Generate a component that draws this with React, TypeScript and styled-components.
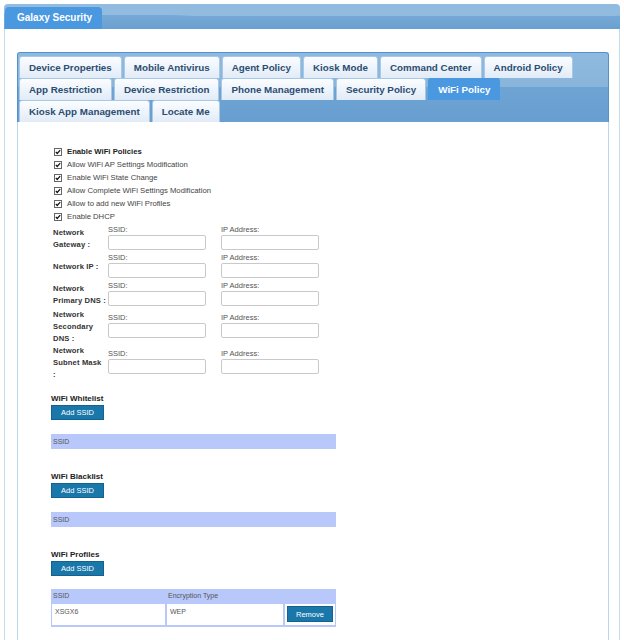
import React from "react";
import styled, { createGlobalStyle } from "styled-components";

const GlobalStyle = createGlobalStyle`
  html, body {
    margin: 0;
    padding: 0;
    background: #fff;
    overflow: hidden;
  }
  body {
    font-family: "Liberation Sans", Arial, sans-serif;
    color: #333;
  }
`;

const Page = styled.div`
  padding: 4px 4px 0 4px;
`;

const Frame = styled.section`
  width: 616px;
`;

const FrameHeader = styled.div`
  height: 25px;
  box-sizing: border-box;
  padding: 3px 0 0 1px;
  border-radius: 4px 4px 0 0;
  display: flex;
  align-items: flex-end;
  background:
    radial-gradient(ellipse 140% 70% at 65% 0%, #92bcdf 0 70%, transparent 71%),
    linear-gradient(#7fb0da, #6aa0d1);
`;

const HeaderTab = styled.div`
  height: 22px;
  line-height: 22px;
  padding: 0 10px 0 12px;
  border-radius: 4px 4px 0 0;
  background: #4a98e0;
  color: #fff;
  font-weight: bold;
  font-size: 10px;
`;

const FrameBody = styled.div`
  border: 1px solid #c2dbef;
  border-top: 0;
  padding: 23px 10px 0 12px;
`;

const TabStrip = styled.div`
  display: flex;
  flex-wrap: wrap;
  column-gap: 2px;
  padding: 3px 1px 0 1px;
  border: 1px solid #5391cd;
  border-bottom: 0;
  border-radius: 3px 3px 0 0;
  background: linear-gradient(#8dbade 0%, #89b5db 49%, #6ea4d4 50%, #699fd0 100%);
`;

const Tab = styled.div<{ $active?: boolean }>`
  height: 22px;
  box-sizing: border-box;
  padding: 0 9px;
  line-height: 21px;
  border: 1px solid ${(p) => (p.$active ? "#4a98e0" : "#a8c8e6")};
  border-bottom: 0;
  border-radius: 3px 3px 0 0;
  font-size: 9.8px;
  font-weight: bold;
  white-space: nowrap;
  color: ${(p) => (p.$active ? "#fff" : "#2b4d72")};
  background: ${(p) =>
    p.$active ? "#4a98e0" : "linear-gradient(#fbfdff, #e1ebf7)"};
`;

const Content = styled.div`
  border-left: 1px solid #bcd6ec;
  border-right: 1px solid #bcd6ec;
  padding: 23px 0 14px 33px;
  background: #fff;
`;

const CheckList = styled.div`
  margin-left: 3px;
`;

const CheckRow = styled.label<{ $strong?: boolean }>`
  display: flex;
  align-items: center;
  gap: 5px;
  height: 13px;
  font-size: 7.7px;
  font-weight: ${(p) => (p.$strong ? "bold" : "normal")};
  color: ${(p) => (p.$strong ? "#222" : "#444")};
`;

const NetworkGrid = styled.div`
  display: grid;
  grid-template-columns: 57px 113px 100px;
  align-items: center;
  margin-top: 2px;
`;

const NetLabel = styled.div`
  padding-left: 2px;
  font-size: 7.6px;
  font-weight: bold;
  line-height: 12px;
  letter-spacing: 0.15px;
  white-space: nowrap;
  color: #333;
`;

const Field = styled.div`
  height: 28px;
  box-sizing: border-box;
  padding-bottom: 3px;
`;

const FieldCaption = styled.div`
  height: 10px;
  line-height: 9px;
  font-size: 7.5px;
  color: #555;
`;

const TextInput = styled.input`
  display: block;
  width: 98px;
  height: 15px;
  box-sizing: border-box;
  margin: 0;
  border: 1px solid #c9c9c9;
  border-radius: 2px;
  background: #fff;
`;

const Sections = styled.div`
  margin-top: 13px;
`;

const Section = styled.div`
  & + & {
    margin-top: 23px;
  }
`;

const SectionTitle = styled.div`
  font-size: 8px;
  font-weight: bold;
  line-height: 10px;
  margin-bottom: 1px;
  color: #222;
`;

const Button = styled.button<{ $w: number; $h: number }>`
  display: block;
  width: ${(p) => p.$w}px;
  height: ${(p) => p.$h}px;
  padding: 0;
  margin: 0;
  border: 1px solid #14628f;
  background: #1a77aa;
  color: #fff;
  font-family: "Liberation Sans", Arial, sans-serif;
  font-size: 7.5px;
`;

const SsidBar = styled.div`
  width: 285px;
  height: 15px;
  margin-top: 14px;
  padding-left: 2px;
  box-sizing: border-box;
  line-height: 15px;
  background: #b9c8fb;
  font-size: 7px;
  color: #555;
`;

const ProfileTable = styled.div`
  width: 285px;
  box-sizing: border-box;
  margin-top: 13px;
  padding: 0 1px 2px 1px;
  display: grid;
  grid-template-columns: 113px 116px 50px;
  column-gap: 2px;
  background: #b9c8fb;
  font-size: 7px;
  color: #555;
`;

const HeadCell = styled.div`
  height: 15px;
  line-height: 14px;
  padding-left: 1px;
`;

const BodyCell = styled.div`
  height: 21px;
  background: #fff;
  padding: 4px 0 0 3px;
  box-sizing: border-box;
`;

const ActionCell = styled(BodyCell)`
  padding: 2px 0 0 2px;
`;

function Check() {
  return (
    <svg width="8" height="8" viewBox="0 0 8 8">
      <rect x="0.5" y="0.5" width="7" height="7" fill="#fff" stroke="#666" />
      <path d="M1.8 3.9 L3.2 5.5 L6.2 2.1" fill="none" stroke="#111" strokeWidth="1.2" />
    </svg>
  );
}

const tabs = [
  "Device Properties",
  "Mobile Antivirus",
  "Agent Policy",
  "Kiosk Mode",
  "Command Center",
  "Android Policy",
  "App Restriction",
  "Device Restriction",
  "Phone Management",
  "Security Policy",
  "WiFi Policy",
  "Kiosk App Management",
  "Locate Me",
];

const checks = [
  "Allow WiFi AP Settings Modification",
  "Enable WiFi State Change",
  "Allow Complete WiFi Settings Modification",
  "Allow to add new WiFi Profiles",
  "Enable DHCP",
];

const networks = [
  ["Network", "Gateway :"],
  ["Network IP :"],
  ["Network", "Primary DNS :"],
  ["Network", "Secondary", "DNS :"],
  ["Network", "Subnet Mask", ":"],
];

const ssidLists = ["WiFi Whitelist", "WiFi Blacklist"];

export default function App() {
  return (
    <>
      <GlobalStyle />
      <Page>
        <Frame>
          <FrameHeader>
            <HeaderTab>Galaxy Security</HeaderTab>
          </FrameHeader>
          <FrameBody>
            <TabStrip>
              {tabs.map((t) => (
                <Tab key={t} $active={t === "WiFi Policy"}>
                  {t}
                </Tab>
              ))}
            </TabStrip>
            <Content>
              <CheckList>
                <CheckRow $strong>
                  <Check />
                  Enable WiFi Policies
                </CheckRow>
                {checks.map((c) => (
                  <CheckRow key={c}>
                    <Check />
                    {c}
                  </CheckRow>
                ))}
              </CheckList>

              <NetworkGrid>
                {networks.map((lines, i) => (
                  <React.Fragment key={i}>
                    <NetLabel>
                      {lines.map((l, j) => (
                        <div key={j}>{l}</div>
                      ))}
                    </NetLabel>
                    <Field>
                      <FieldCaption>SSID:</FieldCaption>
                      <TextInput />
                    </Field>
                    <Field>
                      <FieldCaption>IP Address:</FieldCaption>
                      <TextInput />
                    </Field>
                  </React.Fragment>
                ))}
              </NetworkGrid>

              <Sections>
                {ssidLists.map((title) => (
                  <Section key={title}>
                    <SectionTitle>{title}</SectionTitle>
                    <Button $w={53} $h={15}>Add SSID</Button>
                    <SsidBar>SSID</SsidBar>
                  </Section>
                ))}

                <Section>
                  <SectionTitle>WiFi Profiles</SectionTitle>
                  <Button $w={53} $h={15}>Add SSID</Button>
                  <ProfileTable>
                    <HeadCell>SSID</HeadCell>
                    <HeadCell>Encryption Type</HeadCell>
                    <HeadCell />
                    <BodyCell>XSGX6</BodyCell>
                    <BodyCell>WEP</BodyCell>
                    <ActionCell>
                      <Button $w={46} $h={16}>Remove</Button>
                    </ActionCell>
                  </ProfileTable>
                </Section>
              </Sections>
            </Content>
          </FrameBody>
        </Frame>
      </Page>
    </>
  );
}
